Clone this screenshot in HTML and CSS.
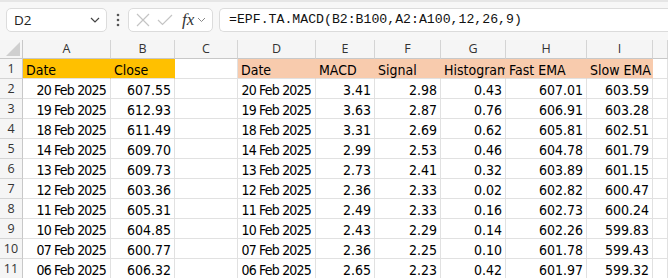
FILE: index.html
```html
<html>
  <head>
    <link rel="stylesheet" href="styles.css">
  </head>
  <body>
    <div class='toolbar'>
      <div class='namebox'>
        <span>D2</span>
        <svg class='chev' width='10' height='6' viewBox='0 0 10 6'><path d='M1 1 L5 5 L9 1' fill='none' stroke='#444' stroke-width='1.2'/></svg>
      </div>
      <div class='dots'>
        <svg width='4' height='14' viewBox='0 0 4 14'><circle cx='2' cy='2' r='1.3' fill='#555'/><circle cx='2' cy='7' r='1.3' fill='#555'/><circle cx='2' cy='12' r='1.3' fill='#555'/></svg>
      </div>
      <div class='fxbox'>
        <svg width='14' height='14' viewBox='0 0 14 14'><path d='M1 1 L13 13 M13 1 L1 13' stroke='#c4c4c4' stroke-width='1.2'/></svg>
        <svg width='16' height='12' viewBox='0 0 16 12'><path d='M1 6 L5.5 10.5 L15 1' fill='none' stroke='#c4c4c4' stroke-width='1.2'/></svg>
        <span class='fx'>fx</span>
        <svg width='9' height='6' viewBox='0 0 9 6'><path d='M1 1 L4.5 4.5 L8 1' fill='none' stroke='#888' stroke-width='1'/></svg>
      </div>
      <div class='formula'>=EPF.TA.MACD(B2:B100,A2:A100,12,26,9)</div>
    </div>
    <div class='sheet'>
      <div class='corner'><svg width='14' height='14' viewBox='0 0 14 14'><path d='M14 0 L14 14 L0 14 Z' fill='#cfcfcf'/></svg></div>
      <div class='colhead'>A</div><div class='colhead'>B</div><div class='colhead'>C</div><div class='colhead'>D</div><div class='colhead'>E</div><div class='colhead'>F</div><div class='colhead'>G</div><div class='colhead'>H</div><div class='colhead'>I</div><div class='colhead'></div>

      <div class='rowhead'>1</div>
      <div class='cell gold'>Date</div><div class='cell gold'>Close</div><div class='cell'></div>
      <div class='cell peach'>Date</div><div class='cell peach'>MACD</div><div class='cell peach'>Signal</div><div class='cell peach'>Histogram</div><div class='cell peach'>Fast EMA</div><div class='cell peach'>Slow EMA</div><div class='cell'></div>

      <div class='rowhead'>2</div>
      <div class='cell num date'>20 Feb 2025</div><div class='cell num'>607.55</div><div class='cell'></div>
      <div class='cell num date'>20 Feb 2025</div><div class='cell num'>3.41</div><div class='cell num'>2.98</div><div class='cell num'>0.43</div><div class='cell num'>607.01</div><div class='cell num'>603.59</div><div class='cell'></div>

      <div class='rowhead'>3</div>
      <div class='cell num date'>19 Feb 2025</div><div class='cell num'>612.93</div><div class='cell'></div>
      <div class='cell num date'>19 Feb 2025</div><div class='cell num'>3.63</div><div class='cell num'>2.87</div><div class='cell num'>0.76</div><div class='cell num'>606.91</div><div class='cell num'>603.28</div><div class='cell'></div>

      <div class='rowhead'>4</div>
      <div class='cell num date'>18 Feb 2025</div><div class='cell num'>611.49</div><div class='cell'></div>
      <div class='cell num date'>18 Feb 2025</div><div class='cell num'>3.31</div><div class='cell num'>2.69</div><div class='cell num'>0.62</div><div class='cell num'>605.81</div><div class='cell num'>602.51</div><div class='cell'></div>

      <div class='rowhead'>5</div>
      <div class='cell num date'>14 Feb 2025</div><div class='cell num'>609.70</div><div class='cell'></div>
      <div class='cell num date'>14 Feb 2025</div><div class='cell num'>2.99</div><div class='cell num'>2.53</div><div class='cell num'>0.46</div><div class='cell num'>604.78</div><div class='cell num'>601.79</div><div class='cell'></div>

      <div class='rowhead'>6</div>
      <div class='cell num date'>13 Feb 2025</div><div class='cell num'>609.73</div><div class='cell'></div>
      <div class='cell num date'>13 Feb 2025</div><div class='cell num'>2.73</div><div class='cell num'>2.41</div><div class='cell num'>0.32</div><div class='cell num'>603.89</div><div class='cell num'>601.15</div><div class='cell'></div>

      <div class='rowhead'>7</div>
      <div class='cell num date'>12 Feb 2025</div><div class='cell num'>603.36</div><div class='cell'></div>
      <div class='cell num date'>12 Feb 2025</div><div class='cell num'>2.36</div><div class='cell num'>2.33</div><div class='cell num'>0.02</div><div class='cell num'>602.82</div><div class='cell num'>600.47</div><div class='cell'></div>

      <div class='rowhead'>8</div>
      <div class='cell num date'>11 Feb 2025</div><div class='cell num'>605.31</div><div class='cell'></div>
      <div class='cell num date'>11 Feb 2025</div><div class='cell num'>2.49</div><div class='cell num'>2.33</div><div class='cell num'>0.16</div><div class='cell num'>602.73</div><div class='cell num'>600.24</div><div class='cell'></div>

      <div class='rowhead'>9</div>
      <div class='cell num date'>10 Feb 2025</div><div class='cell num'>604.85</div><div class='cell'></div>
      <div class='cell num date'>10 Feb 2025</div><div class='cell num'>2.43</div><div class='cell num'>2.29</div><div class='cell num'>0.14</div><div class='cell num'>602.26</div><div class='cell num'>599.83</div><div class='cell'></div>

      <div class='rowhead'>10</div>
      <div class='cell num date'>07 Feb 2025</div><div class='cell num'>600.77</div><div class='cell'></div>
      <div class='cell num date'>07 Feb 2025</div><div class='cell num'>2.36</div><div class='cell num'>2.25</div><div class='cell num'>0.10</div><div class='cell num'>601.78</div><div class='cell num'>599.43</div><div class='cell'></div>

      <div class='rowhead'>11</div>
      <div class='cell num date'>06 Feb 2025</div><div class='cell num'>606.32</div><div class='cell'></div>
      <div class='cell num date'>06 Feb 2025</div><div class='cell num'>2.65</div><div class='cell num'>2.23</div><div class='cell num'>0.42</div><div class='cell num'>601.97</div><div class='cell num'>599.32</div><div class='cell'></div>
    </div>
  </body>
</html>
```

FILE: styles.css
```css
body {
  margin: 0;
  background: #fff;
  overflow: hidden;
}

.toolbar {
  height: 40px;
  box-sizing: border-box;
  padding: 8px 0 0 6px;
  background: #f7f7f7;
  border-top: 2px solid #e6e6e6;
  display: flex;
  flex-direction: row;
  align-items: flex-start;
}

.namebox {
  width: 101px;
  height: 24px;
  box-sizing: border-box;
  margin-top: -2px;
  background: #fff;
  border: 1px solid #dcdcdc;
  border-radius: 5px;
  display: flex;
  align-items: center;
  justify-content: space-between;
  padding: 0 6px 0 7px;
  font-family: "Open Sans", "Liberation Sans", sans-serif;
  font-size: 13.5px;
  color: #222;
}

.dots {
  width: 21px;
  height: 24px;
  margin-top: -2px;
  display: flex;
  align-items: center;
  justify-content: center;
}

.fxbox {
  width: 85px;
  height: 24px;
  margin-top: -2px;
  box-sizing: border-box;
  background: #fff;
  border: 1px solid #dcdcdc;
  border-radius: 5px;
  display: flex;
  align-items: center;
  padding: 0 3px 0 7px;
  gap: 7px;
}

.fx {
  font-family: "Liberation Serif", serif;
  font-style: italic;
  font-size: 17px;
  color: #333;
  margin-left: 2px;
  margin-right: -4px;
}

.formula {
  flex: 1;
  height: 24px;
  margin-top: -2px;
  margin-left: 6px;
  box-sizing: border-box;
  background: #fff;
  border: 1px solid #dcdcdc;
  border-right: none;
  border-radius: 5px 0 0 5px;
  padding-left: 9px;
  line-height: 22px;
  font-family: "Liberation Mono", monospace;
  font-size: 13.2px;
  color: #111;
  white-space: nowrap;
}

.sheet {
  display: grid;
  grid-template-columns: 23px 88px 64px 63px 78px 59px 66px 65px 81px 66px 1fr;
  grid-template-rows: 19px repeat(11, 20px);
}

.sheet > div {
  box-sizing: border-box;
}

.corner {
  background: #f5f5f5;
  border-right: 1px solid #c8c8c8;
  border-bottom: 1px solid #c8c8c8;
  display: flex;
  align-items: flex-end;
  justify-content: flex-end;
  padding: 0 2px 2px 0;
}

.colhead {
  background: #f5f5f5;
  border-right: 1px solid #d4d4d4;
  border-bottom: 1px solid #c8c8c8;
  text-align: center;
  font-family: "Open Sans", "Liberation Sans", sans-serif;
  font-size: 12.5px;
  line-height: 18px;
  color: #333;
}

.rowhead {
  background: #f5f5f5;
  border-right: 1px solid #c8c8c8;
  border-bottom: 1px solid #d4d4d4;
  text-align: center;
  font-family: "Open Sans", "Liberation Sans", sans-serif;
  font-size: 12.5px;
  line-height: 20px;
  color: #333;
}

.cell {
  border-right: 1px solid #e1e1e1;
  border-bottom: 1px solid #e1e1e1;
  padding: 2px 3px 0 3px;
  font-family: "Liberation Sans Narrow", "DejaVu Sans Condensed", "Liberation Sans", sans-serif;
  font-size: 14px;
  line-height: 18px;
  color: #000;
  white-space: nowrap;
  overflow: hidden;
}

.num {
  text-align: right;
}

.date {
  letter-spacing: -0.8px;
  padding-right: 4px;
}

.gold {
  background: #ffc000;
  border-right-color: #ffc000;
}

.peach {
  background: #f8cbad;
  border-right-color: #f8cbad;
}
```
